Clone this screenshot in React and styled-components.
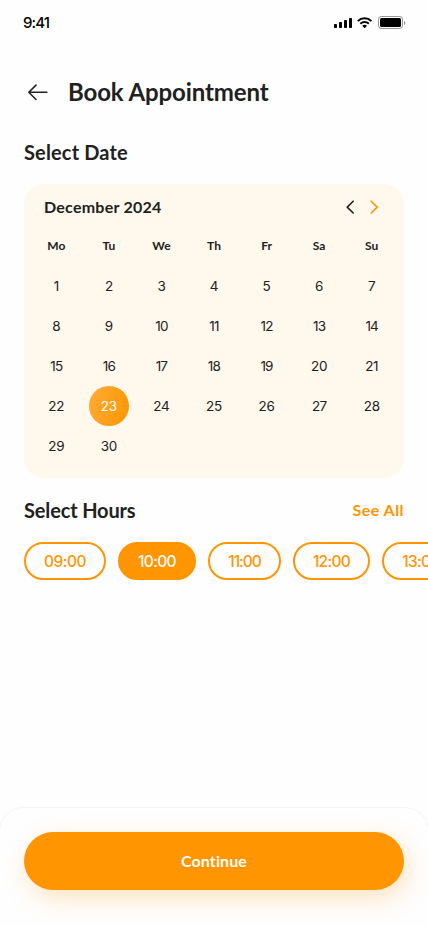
import React from 'react';
import styled, { createGlobalStyle } from 'styled-components';

const ORANGE = '#ff9500';
const INK = '#212121';

const GlobalStyle = createGlobalStyle`
  * { box-sizing: border-box; }
  body { margin: 0; background: #fefefe; }
  button { border: 0; padding: 0; margin: 0; background: none; font: inherit; color: inherit; display: block; }
  svg { display: block; }
`;

const Screen = styled.div`
  width: 428px;
  height: 926px;
  overflow: hidden;
  display: flex;
  flex-direction: column;
  background: #fefefe;
  color: ${INK};
  font-family: Lato, 'Open Sans', sans-serif;
`;

const StatusBar = styled.div`
  height: 44px;
  padding: 0 22px 0 23px;
  display: flex;
  align-items: center;
  justify-content: space-between;
  color: #000;
`;

const Clock = styled.span`
  padding-top: 1px;
  font: 500 15px/20px Inter, sans-serif;
  letter-spacing: -0.9px;
`;

const Header = styled.header`
  height: 48px;
  margin-top: 24px;
  padding: 0 24px;
  display: flex;
  align-items: center;
  gap: 16px;
`;

const Title = styled.h1`
  margin: 0;
  font-size: 24px;
  line-height: 30px;
  font-weight: 700;
  letter-spacing: -0.12px;
`;

const SectionHead = styled.div`
  height: 24px;
  margin-top: ${(p) => p.$top}px;
  padding: 0 24px;
  display: flex;
  align-items: center;
  justify-content: space-between;
`;

const SectionTitle = styled.h2`
  margin: 0;
  font-size: 20px;
  line-height: 24px;
  font-weight: 700;
  letter-spacing: ${(p) => p.$spacing}px;
`;

const SeeAll = styled.button`
  color: ${ORANGE};
  font-size: 16px;
  line-height: 22px;
  font-weight: 700;
  letter-spacing: 0.45px;
`;

const Calendar = styled.section`
  height: 294px;
  margin: 20px 24px 0;
  padding: 0 6px;
  border-radius: 20px;
  background: #fff8ed;
`;

const MonthBar = styled.div`
  height: 46px;
  padding: 0 14px;
  display: flex;
  align-items: center;
  justify-content: space-between;
`;

const Month = styled.span`
  font-size: 16px;
  line-height: 20px;
  font-weight: 700;
  letter-spacing: 0.25px;
`;

const MonthNav = styled.div`
  display: flex;
  gap: 4px;
`;

const Grid = styled.div`
  display: grid;
  grid-template-columns: repeat(7, 1fr);
  justify-items: center;
`;

const Weekday = styled.span`
  height: 36px;
  font-size: 12px;
  line-height: 32px;
  font-weight: 700;
`;

const Day = styled.button`
  width: 40px;
  height: 40px;
  border-radius: 50%;
  font-family: Inter, sans-serif;
  font-size: 13.5px;
  line-height: 41px;
  font-weight: 400;
  letter-spacing: ${(p) => (p.$narrow ? -0.8 : -0.3)}px;
  text-align: center;
  color: ${(p) => (p.$selected ? '#fff' : INK)};
  background: ${(p) => (p.$selected ? 'linear-gradient(286deg, #ff9500 0%, #ffab38 100%)' : 'none')};
`;

const Hours = styled.div`
  height: 38px;
  margin-top: 20px;
  padding-left: 24px;
  display: flex;
  gap: 12px;
  overflow: hidden;
`;

const Hour = styled.button`
  flex: none;
  width: ${(p) => p.$width}px;
  height: 38px;
  border: 2px solid ${ORANGE};
  border-radius: 19px;
  background: ${(p) => (p.$active ? ORANGE : 'transparent')};
  color: ${(p) => (p.$active ? '#fff' : ORANGE)};
  font: 500 15.5px/36px Inter, sans-serif;
  letter-spacing: ${(p) => p.$spacing}px;
  text-align: center;
`;

const Footer = styled.footer`
  height: 119px;
  margin: auto -1px 0;
  padding: 24px 24px 0;
  border: 1px solid #f5f5f5;
  border-bottom: 0;
  border-radius: 24px 24px 0 0;
`;

const Continue = styled.button`
  width: 100%;
  height: 58px;
  border-radius: 29px;
  background: ${ORANGE};
  color: #fff;
  font-size: 16px;
  line-height: 58px;
  font-weight: 700;
  letter-spacing: 0.1px;
  text-align: center;
  box-shadow: 4px 8px 24px rgba(255, 149, 0, 0.25);
`;

const StatusIcons = () => (
  <svg width="72" height="16" viewBox="334 14 72 16">
    <rect x="334" y="24" width="3" height="4" rx=".8" />
    <rect x="339" y="22" width="3" height="6" rx=".8" />
    <rect x="344" y="20" width="3" height="8" rx=".8" />
    <rect x="349" y="18" width="3" height="10" rx=".8" />
    <g fill="none" stroke="#000" strokeWidth="2">
      <path d="M357.8 21.1a9.7 9.7 0 0 1 13.6 0" />
      <path d="M360.4 23.8a6 6 0 0 1 8.4 0" />
    </g>
    <path d="M362.2 25.7a3.7 3.7 0 0 1 4.8 0l-2.4 2.5z" />
    <rect x="378.5" y="16.5" width="24" height="12" rx="2.8" fill="none" stroke="#000" strokeOpacity=".4" />
    <rect x="380" y="18" width="21" height="9" rx="1.5" />
    <path d="M404 21v4c.8-.4 1.3-1.1 1.3-2s-.5-1.6-1.3-2z" fillOpacity=".4" />
  </svg>
);

const BackArrow = () => (
  <svg width="28" height="28" viewBox="0 0 28 28" fill="none" stroke={INK} strokeWidth="1.6" strokeLinecap="round" strokeLinejoin="round">
    <path d="M4.8 14.3H22.8M12 7.1L4.8 14.3l7.2 7.2" />
  </svg>
);

const Chevron = ({ next }) => (
  <svg width="20" height="20" viewBox="0 0 20 20" fill="none" stroke={next ? ORANGE : INK} strokeWidth="1.6" strokeLinecap="round" strokeLinejoin="round">
    <path d={next ? 'M7.2 4.2l6 5.9-6 5.9' : 'M13.2 4.2l-6 5.9 6 5.9'} />
  </svg>
);

const WEEKDAYS = ['Mo', 'Tu', 'We', 'Th', 'Fr', 'Sa', 'Su'];
const DAYS = Array.from({ length: 30 }, (_, i) => i + 1);
const HOURS = [
  { time: '09:00', width: 82, spacing: -0.45 },
  { time: '10:00', width: 78, spacing: -0.65 },
  { time: '11:00', width: 73, spacing: -1 },
  { time: '12:00', width: 77, spacing: -0.7 },
  { time: '13:00', width: 78, spacing: -0.7 },
];

export default function App() {
  return (
    <>
      <GlobalStyle />
      <Screen>
        <StatusBar>
          <Clock>9:41</Clock>
          <StatusIcons />
        </StatusBar>
        <Header>
          <button aria-label="Back"><BackArrow /></button>
          <Title>Book Appointment</Title>
        </Header>
        <SectionHead $top={24}>
          <SectionTitle $spacing={0.15}>Select Date</SectionTitle>
        </SectionHead>
        <Calendar>
          <MonthBar>
            <Month>December 2024</Month>
            <MonthNav>
              <button aria-label="Previous month"><Chevron /></button>
              <button aria-label="Next month"><Chevron next /></button>
            </MonthNav>
          </MonthBar>
          <Grid>
            {WEEKDAYS.map((d) => <Weekday key={d}>{d}</Weekday>)}
            {DAYS.map((d) => (
              <Day key={d} $selected={d === 23} $narrow={d === 27 || (d > 9 && d < 20)}>{d}</Day>
            ))}
          </Grid>
        </Calendar>
        <SectionHead $top={20}>
          <SectionTitle $spacing={-0.15}>Select Hours</SectionTitle>
          <SeeAll>See All</SeeAll>
        </SectionHead>
        <Hours>
          {HOURS.map((h) => (
            <Hour key={h.time} $width={h.width} $spacing={h.spacing} $active={h.time === '10:00'}>{h.time}</Hour>
          ))}
        </Hours>
        <Footer>
          <Continue>Continue</Continue>
        </Footer>
      </Screen>
    </>
  );
}
